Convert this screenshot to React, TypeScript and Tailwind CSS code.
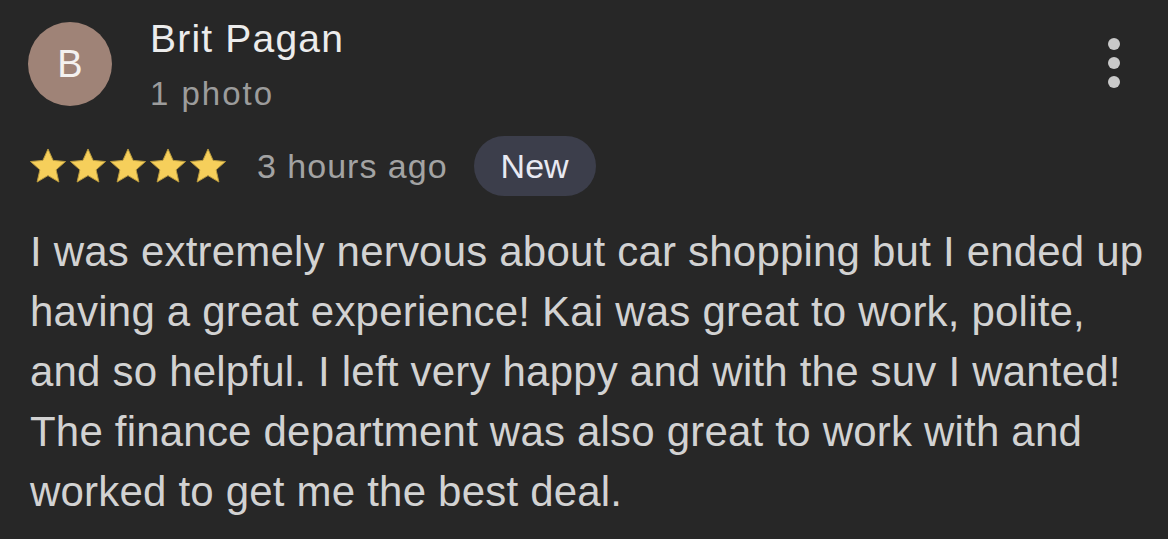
import React from "react";

function Star() {
  return (
    <svg width="40" height="38" viewBox="0 0 24 23" className="shrink-0">
      <polygon
        points="12,1.2 15.1,8.1 22.6,8.8 16.9,13.8 18.6,21.2 12,17.3 5.4,21.2 7.1,13.8 1.4,8.8 8.9,8.1"
        fill="#f6cf5b"
        stroke="#b89a3e"
        strokeWidth="0.6"
        strokeLinejoin="round"
      />
    </svg>
  );
}

const lines = [
  "I was extremely nervous about car shopping but I ended up",
  "having a great experience! Kai was great to work, polite,",
  "and so helpful. I left very happy and with the suv I wanted!",
  "The finance department was also great to work with and",
  "worked to get me the best deal.",
];

export default function App() {
  return (
    <div className="h-[539px] w-[1168px] overflow-hidden bg-[#272727] font-['Liberation_Sans',Arial,sans-serif]">
      <div className="flex items-start pl-[28px] pr-[48px] pt-[22px]">
        <div className="flex h-[84px] w-[84px] shrink-0 items-center justify-center rounded-full bg-[#9f8377] text-[38px] leading-none text-[#f4f1ef]">
          B
        </div>
        <div className="ml-[38px] flex flex-col">
          <span className="mt-[-3px] text-[39px] leading-[39px] tracking-[1.2px] text-[#ececec]">
            Brit Pagan
          </span>
          <span className="mt-[19px] text-[33px] leading-[33px] tracking-[2px] text-[#9c9c9c]">
            1 photo
          </span>
        </div>
        <div className="ml-auto mt-[16px] flex flex-col items-center gap-[7px]">
          <span className="h-[12px] w-[12px] rounded-full bg-[#c9c9c9]" />
          <span className="h-[12px] w-[12px] rounded-full bg-[#c9c9c9]" />
          <span className="h-[12px] w-[12px] rounded-full bg-[#c9c9c9]" />
        </div>
      </div>

      <div className="mt-[26px] flex items-center pl-[28px]">
        <div className="flex">
          <Star />
          <Star />
          <Star />
          <Star />
          <Star />
        </div>
        <span className="ml-[29px] text-[34px] tracking-[1px] text-[#a3a3a3]">3 hours ago</span>
        <span className="ml-[26px] flex h-[60px] items-center rounded-full bg-[#3c3e4b] px-[27px] text-[34px] text-[#e8e9f2]">
          New
        </span>
      </div>

      <p className="mt-[26px] pl-[30px] text-[42px] leading-[60px] tracking-[0.2px] text-[#d2d2d2]">
        {lines.map((l) => (
          <span key={l} className="block whitespace-nowrap">
            {l}
          </span>
        ))}
      </p>
    </div>
  );
}
